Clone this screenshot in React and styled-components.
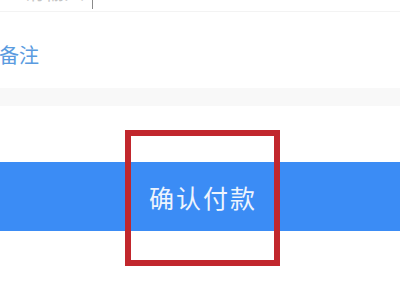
import React from "react";
import styled, { createGlobalStyle } from "styled-components";

const Global = createGlobalStyle`
  html, body { margin: 0; padding: 0; background: #ffffff; }
  body { font-family: "Noto Sans CJK SC", "Noto Sans", sans-serif; }
  #root { width: 400px; height: 300px; overflow: hidden; }
`;

const Page = styled.div`
  position: relative;
  width: 400px;
  height: 300px;
  background: #ffffff;
  display: flex;
  flex-direction: column;
`;

const FieldRow = styled.div`
  height: 12px;
  border-bottom: 1px solid #f3f3f3;
  overflow: hidden;
  display: flex;
  align-items: flex-end;
  padding-left: 24px;
  box-sizing: border-box;
`;

const FieldText = styled.span`
  font-size: 20px;
  line-height: 20px;
  color: #c4c4c4;
  margin-bottom: 9px;
`;

const Cursor = styled.span`
  width: 1px;
  height: 9px;
  background: #8a8a8a;
  margin-left: 8px;
  align-self: flex-start;
`;

const RemarkRow = styled.div`
  height: 76px;
  display: flex;
  align-items: center;
  padding-top: 8px;
  box-sizing: border-box;
`;

const RemarkLabel = styled.span`
  font-size: 20px;
  color: #5a9be0;
  margin-left: -1px;
`;

const GrayBand = styled.div`
  height: 18px;
  background: #f8f8f8;
`;

const Spacer = styled.div`
  height: ${(p) => p.$h}px;
`;

const PayButton = styled.div`
  height: 69px;
  background: #3b8cf5;
  display: flex;
  align-items: center;
  justify-content: center;
  color: #eef4fd;
  font-size: 25px;
  letter-spacing: 2px;
  padding-left: 6px;
`;

const Highlight = styled.div`
  position: absolute;
  left: 125px;
  top: 130px;
  width: 155px;
  height: 136px;
  border: 6px solid #c1272d;
  box-sizing: border-box;
  pointer-events: none;
`;

export default function App() {
  return (
    <>
      <Global />
      <Page>
        <FieldRow>
          <FieldText>请输入</FieldText>
          <Cursor />
        </FieldRow>
        <RemarkRow>
          <RemarkLabel>备注</RemarkLabel>
        </RemarkRow>
        <GrayBand />
        <Spacer $h={56} />
        <PayButton>确认付款</PayButton>
        <Highlight />
      </Page>
    </>
  );
}
